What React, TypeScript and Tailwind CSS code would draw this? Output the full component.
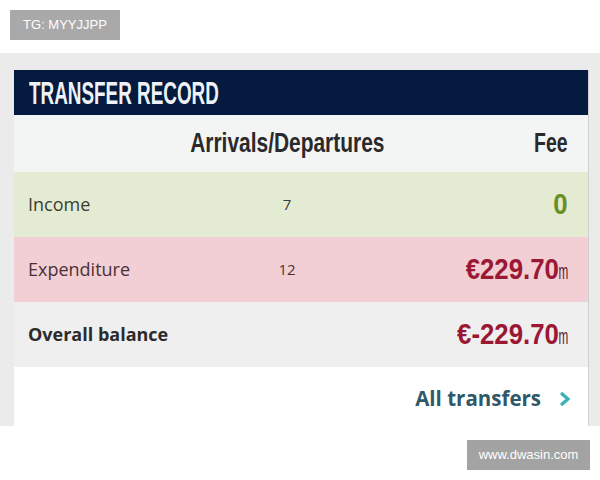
import React from 'react';

// no condensed face is installed, so bold Liberation Sans is narrowed with scale-x
const cond = '"Liberation Sans", Arial, sans-serif';

function Amount({ value }: { value: string }) {
  return (
    <span className="inline-block origin-right scale-x-[0.86] font-bold text-[30px] leading-none text-[#9b1834]" style={{ fontFamily: cond }}>
      {value}
      <span className="inline-block origin-left scale-x-[0.62] font-normal text-[22px] text-[#5a2030] mr-[-8px]">m</span>
    </span>
  );
}

export default function App() {
  return (
    <div className="w-[600px] h-[480px] bg-white font-['Open_Sans',sans-serif] flex flex-col">
      {/* Top watermark */}
      <div className="h-[53px] px-[10px] pt-[10px]">
        <div className="w-[110px] h-[30px] bg-[#a9a9a9] text-white text-[13px] flex items-center justify-center font-['Liberation_Sans',sans-serif]">
          TG: MYYJJPP
        </div>
      </div>

      {/* Screenshot region */}
      <div className="h-[373px] bg-[#ebebeb] pl-[14px] pr-[11px] pt-[17px]">
        <div className="h-full bg-white border-r border-[#d0d0d0] flex flex-col">
          <div className="h-[45px] bg-[#041a3e] flex items-center pl-[15px]">
            <span className="inline-block origin-left scale-x-[0.59] text-[#eef2f6] font-bold text-[32px] leading-none" style={{ fontFamily: cond }}>
              TRANSFER RECORD
            </span>
          </div>

          <div className="h-[57px] bg-[#f3f4f4] grid grid-cols-[161px_196px_1fr] items-center pl-[14px] pr-[20px] text-[#2a2a2a]">
            <span />
            <span className="flex justify-center">
              <span className="inline-block shrink-0 whitespace-nowrap scale-x-[0.775] font-bold text-[27px] leading-none" style={{ fontFamily: cond }}>Arrivals/Departures</span>
            </span>
            <span className="text-right">
              <span className="inline-block origin-right scale-x-[0.72] font-bold text-[27px] leading-none" style={{ fontFamily: cond }}>Fee</span>
            </span>
          </div>

          <div className="h-[65px] bg-[#e3ebd3] grid grid-cols-[161px_196px_1fr] items-center pl-[14px] pr-[20px] text-[#3b3d35]">
            <span className="text-[18px]">Income</span>
            <span className="text-center text-[15px]">7</span>
            <span className="text-right">
              <span className="inline-block origin-right scale-x-[0.86] font-bold text-[30px] leading-none text-[#6b8e24]" style={{ fontFamily: cond }}>0</span>
            </span>
          </div>

          <div className="h-[65px] bg-[#f2cfd4] grid grid-cols-[161px_196px_1fr] items-center pl-[14px] pr-[20px] text-[#4a3138]">
            <span className="text-[18px]">Expenditure</span>
            <span className="text-center text-[15px]">12</span>
            <span className="text-right"><Amount value="€229.70" /></span>
          </div>

          <div className="h-[65px] bg-[#efefef] grid grid-cols-[161px_196px_1fr] items-center pl-[14px] pr-[20px]">
            <span className="text-[18px] font-bold text-[#2b2b2b] whitespace-nowrap">Overall balance</span>
            <span />
            <span className="text-right"><Amount value="€-229.70" /></span>
          </div>

          <div className="flex-1 flex items-center justify-end pr-[17px] pt-[4px]">
            <span className="text-[20.5px] font-bold text-[#2f5868] mr-[17px]">All transfers</span>
            <svg width="13" height="16" viewBox="0 0 13 16">
              <path d="M3 2 L10 8 L3 14" stroke="#3ab0b0" strokeWidth="3.2" fill="none" />
            </svg>
          </div>
        </div>
      </div>

      {/* Bottom watermark */}
      <div className="flex-1 flex justify-end pr-[10px] pt-[14px]">
        <div className="w-[123px] h-[30px] bg-[#a3a3a3] text-white text-[13px] flex items-center justify-center font-['Liberation_Sans',sans-serif]">
          www.dwasin.com
        </div>
      </div>
    </div>
  );
}
